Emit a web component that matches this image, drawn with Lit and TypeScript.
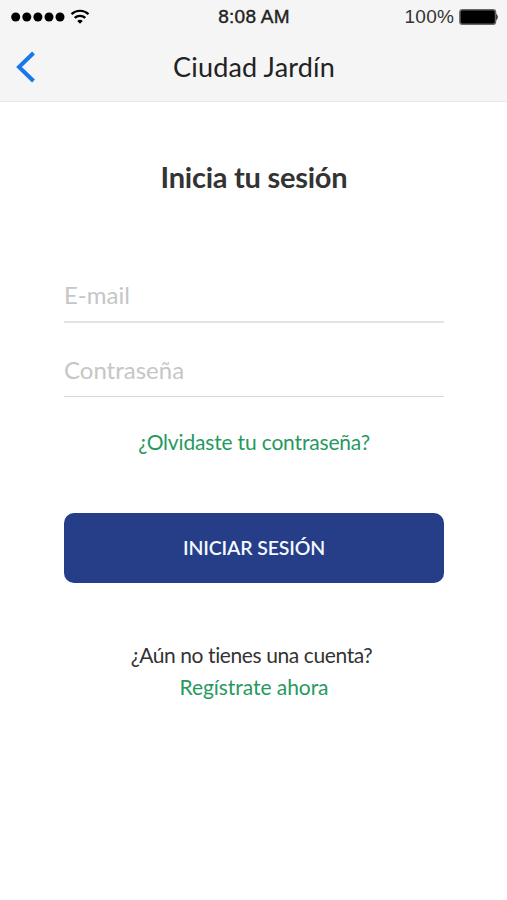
import { LitElement, html, svg, css } from "lit";
import { customElement } from "lit/decorators.js";

@customElement("app-root")
export class AppRoot extends LitElement {
  static styles = css`
    :host { display: block; height: 900px; background: #fff; color: #333; font-family: Lato, sans-serif; font-variant-ligatures: none; }
    * { box-sizing: border-box; }
    .screen { height: 900px; display: flex; flex-direction: column; overflow: hidden; }
    .top { height: 102px; background: #f5f5f5; border-bottom: 1px solid #e9e9e9; color: #222; }
    .status { height: 34px; display: grid; grid-template-columns: 1fr auto 1fr; align-items: center; padding: 0 8px 0 10px; font: 19px/34px "Liberation Sans", sans-serif; }
    .time { -webkit-text-stroke: 0.4px #222; letter-spacing: 0.25px; margin-left: -1px; }
    .percent { color: #333; letter-spacing: 0.2px; }
    .status svg { display: block; }
    .battery { display: flex; justify-content: flex-end; align-items: center; gap: 5px; }
    .nav { height: 67px; display: grid; grid-template-columns: 60px 1fr 60px; align-items: center; }
    .title { text-align: center; font-size: 27px; line-height: 65px; height: 67px; letter-spacing: 0.17px; padding-left: 1px; }
    .back { display: block; margin: -1px 0 0 14px; }
    h1 { margin: 57px 0 0; text-align: center; font-size: 29px; line-height: 36px; font-weight: 700; letter-spacing: -0.25px; padding-left: 1px; }
    form { padding: 0 63px 0 64px; display: flex; flex-direction: column; margin-top: 73px; }
    .field { height: 55px; border-bottom: 2px solid #e3e3e3; font-size: 24px; line-height: 54px; color: #c6c6c6; }
    .field + .field { margin-top: 20px; height: 54px; border-bottom: 1px solid #d8d8d8; }
    .link { color: #27995f; text-align: center; font-size: 21px; line-height: 32px; }
    .forgot { margin-top: 29px; letter-spacing: -0.17px; }
    .submit { margin-top: 55px; height: 70px; border: 0; border-radius: 10px; background: #253e87; color: #f4f8ff; font: 600 19.5px/70px Lato, sans-serif; letter-spacing: -0.15px; padding: 0; }
    .foot { margin-top: 56px; text-align: center; font-size: 21px; line-height: 32px; letter-spacing: -0.4px; }
    .ask { padding-right: 4px; }
    .foot .link { letter-spacing: -0.05px; padding-left: 1px; }
  `;
  render() {
    return html`<div class="screen">
      <header class="top">
        <div class="status">
          <svg width="84" height="20" viewBox="0 0 84 20" fill="#000">
            ${[5.7, 16.8, 27.9, 39, 50].map((x) => svg`<circle cx=${x} cy="10" r="4.5" />`)}
            <g fill="none" stroke="#000" stroke-width="2.2"><path d="M61.5 7.1a12.5 12.5 0 0 1 17 0M64.7 10.9a7.8 7.8 0 0 1 10.6 0" /></g>
            <path d="M67.2 14a4 4 0 0 1 5.6 0L70 16.8z" />
          </svg>
          <span class="time">8:08 AM</span>
          <div class="battery"><span class="percent">100%</span>
            <svg width="40" height="16" viewBox="0 0 40 16"><rect x=".9" y=".8" width="35.6" height="14.4" rx="2.5" fill="#000" stroke="#666" stroke-width="1.5" /><path d="M37.2 4.5q3.200 3.500 0 7z" fill="#222" /></svg>
          </div>
        </div>
        <div class="nav">
          <svg class="back" width="24" height="34" viewBox="0 0 24 34"><path d="M19.5 3 5 17l14.5 14" fill="none" stroke="#1877ea" stroke-width="4" /></svg>
          <span class="title">Ciudad Jardín</span>
        </div>
      </header>
      <h1>Inicia tu sesión</h1>
      <form>
        <div class="field">E-mail</div>
        <div class="field">Contraseña</div>
        <a class="link forgot">¿Olvidaste tu contraseña?</a>
        <button class="submit" type="button">INICIAR SESIÓN</button>
      </form>
      <div class="foot"><div class="ask">¿Aún no tienes una cuenta?</div><div class="link">Regístrate ahora</div></div>
    </div>`;
  }
}
